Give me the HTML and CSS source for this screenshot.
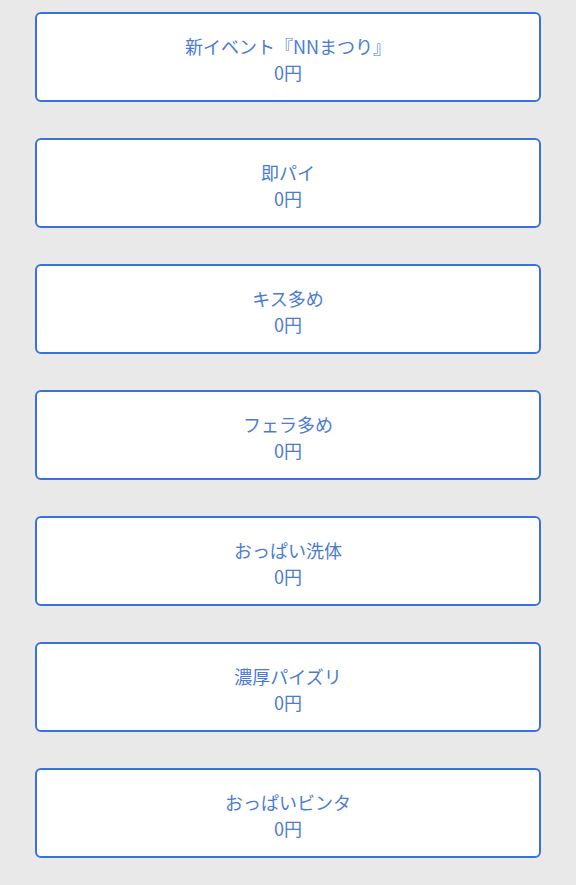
FILE: index.html
```html
<!DOCTYPE html>
<html lang="ja">
<head>
  <meta charset="UTF-8">
  <meta name="viewport" content="width=device-width, initial-scale=1.0">
  <title>オプション</title>
  <link rel="stylesheet" href="styles.css">
</head>
<body>
  <div class="options">
    <button class="option">新イベント『NNまつり』<br>0円</button>
    <button class="option">即パイ<br>0円</button>
    <button class="option">キス多め<br>0円</button>
    <button class="option">フェラ多め<br>0円</button>
    <button class="option">おっぱい洗体<br>0円</button>
    <button class="option">濃厚パイズリ<br>0円</button>
    <button class="option">おっぱいビンタ<br>0円</button>
  </div>
</body>
</html>
```

FILE: styles.css
```css
body {
  margin: 0;
  background-color: #e9e9e9;
  font-family: "Noto Sans CJK JP", "Noto Sans", sans-serif;
}

.options {
  display: flex;
  flex-direction: column;
  gap: 36px;
  padding: 12px 35px;
}

.option {
  box-sizing: border-box;
  height: 90px;
  padding: 4px 0 0;
  background-color: #fff;
  border: 2px solid #3a72dc;
  border-radius: 6px;
  color: #4a7cd4;
  font-family: inherit;
  font-size: 18px;
  font-weight: 400;
  line-height: 26px;
  text-align: center;
  cursor: pointer;
}
```
